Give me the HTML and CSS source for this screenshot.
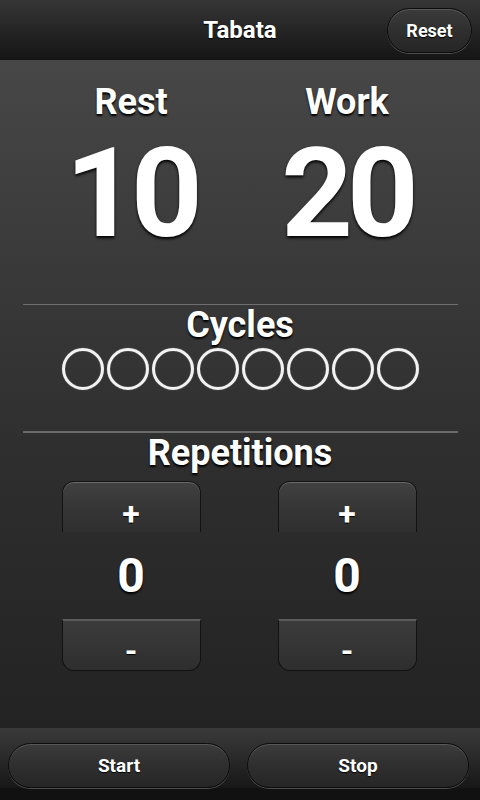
FILE: index.html
```html
<!DOCTYPE html>
<html>
<head>
<meta charset="utf-8">
<link rel="stylesheet" href="styles.css">
</head>
<body>
<div class="app">
  <header class="topbar">
    <div class="side"></div>
    <h1 class="title">Tabata</h1>
    <div class="side side-right"><button class="pill reset">Reset</button></div>
  </header>
  <main class="content">
    <section class="timers">
      <div class="timer">
        <div class="label">Rest</div>
        <div class="big">10</div>
      </div>
      <div class="timer">
        <div class="label">Work</div>
        <div class="big">20</div>
      </div>
    </section>
    <hr class="divider thin">
    <section class="cycles">
      <div class="heading">Cycles</div>
      <div class="rings">
        <span class="ring"></span><span class="ring"></span><span class="ring"></span><span class="ring"></span>
        <span class="ring"></span><span class="ring"></span><span class="ring"></span><span class="ring"></span>
      </div>
    </section>
    <hr class="divider thick">
    <section class="reps">
      <div class="heading rep-heading">Repetitions</div>
      <div class="steppers">
        <div class="stepper">
          <button class="step plus">+</button>
          <div class="count">0</div>
          <button class="step minus">-</button>
        </div>
        <div class="stepper">
          <button class="step plus">+</button>
          <div class="count">0</div>
          <button class="step minus">-</button>
        </div>
      </div>
    </section>
  </main>
  <footer class="bottombar">
    <button class="pill action">Start</button>
    <button class="pill action">Stop</button>
  </footer>
</div>
</body>
</html>
```
FILE: styles.css
```css
* { box-sizing: border-box; }
html, body { margin: 0; padding: 0; }
body {
  width: 480px;
  height: 800px;
  overflow: hidden;
  font-family: Roboto, "Liberation Sans", sans-serif;
  font-weight: 700;
  color: #fff;
  background: #222;
}
.app {
  display: flex;
  flex-direction: column;
  height: 800px;
}
.topbar {
  height: 60px;
  display: grid;
  grid-template-columns: 1fr auto 1fr;
  align-items: center;
  background: linear-gradient(#363636, #2a2a2a 35%, #151515);
}
.title {
  margin: 0;
  font-size: 24px;
  line-height: 30px;
  font-weight: 700;
  text-shadow: 0 1px 1px #000;
  padding-bottom: 1px;
}
.side-right {
  display: flex;
  justify-content: flex-end;
  padding-right: 8px;
}
.pill {
  font-family: Roboto, "Liberation Sans", sans-serif;
  font-weight: 700;
  color: #fff;
  font-size: 18px;
  text-shadow: 0 1px 1px #000;
  border: 1px solid #0c0c0c;
  border-radius: 24px;
  background: linear-gradient(#3b3b3b, #2f2f2f 50%, #262626);
  box-shadow: inset 0 1px 0 #5a5a5a, 0 1px 0 #4e4e4e;
  padding: 0;
}
.reset {
  width: 85px;
  height: 45px;
  margin-top: 1px;
}
.content {
  height: 668px;
  display: flex;
  flex-direction: column;
  background: linear-gradient(#474747 0, #3a3a3a 30%, #2e2e2e 60%, #232323 100%);
}
.timers {
  display: grid;
  grid-template-columns: 216px 216px;
  padding: 22px 0 0 23px;
}
.timer {
  display: flex;
  flex-direction: column;
  align-items: center;
}
.label {
  font-size: 36px;
  line-height: 40px;
  text-shadow: 0 2px 2px #000;
}
.big {
  font-size: 125px;
  line-height: 125px;
  margin-top: 9px;
  letter-spacing: -6px;
  text-shadow: 0 2px 3px #000;
}
.divider {
  border: 0;
  margin: 0 22px 0 23px;
}
.divider.thin {
  margin-top: 48px;
  height: 1px;
  background: #6f6f6f;
}
.divider.thick {
  margin-top: 41px;
  height: 2px;
  background: #6a6a6a;
}
.cycles, .reps {
  display: flex;
  flex-direction: column;
  align-items: center;
}
.heading {
  font-size: 36px;
  line-height: 40px;
  text-shadow: 0 2px 2px #000;
}
.rings {
  display: flex;
  gap: 3px;
  margin-top: 3px;
}
.ring {
  width: 42px;
  height: 42px;
  border-radius: 50%;
  border: 3px solid #f2f2f2;
  box-shadow: 0 0 1px #999, inset 0 0 1px #999;
}
.rep-heading {
  margin-top: 0;
}
.steppers {
  align-self: stretch;
  display: grid;
  grid-template-columns: 216px 216px;
  padding-left: 23px;
  margin-top: 8px;
}
.stepper {
  display: flex;
  flex-direction: column;
  align-items: center;
}
.step {
  width: 139px;
  height: 51px;
  font-family: Roboto, "Liberation Sans", sans-serif;
  font-weight: 700;
  color: #fff;
  font-size: 32px;
  line-height: 32px;
  text-shadow: 0 1px 1px #000;
  background: linear-gradient(#414141, #363636 50%, #2f2f2f);
  border: 1px solid #121212;
  padding: 14px 0 0;
}
.plus {
  border-bottom: 0;
  border-radius: 12px 12px 0 0;
  box-shadow: inset 0 1px 0 #6a6a6a;
}
.minus {
  height: 52px;
  border-top: 2px solid #5c5c5c;
  border-radius: 0 0 12px 12px;
  background: linear-gradient(#3b3b3b, #353535 50%, #2e2e2e);
  padding-top: 11px;
}
.count {
  height: 87px;
  display: flex;
  align-items: center;
  justify-content: center;
  font-size: 48px;
  text-shadow: 0 2px 2px #000;
}
.bottombar {
  height: 72px;
  display: flex;
  gap: 17px;
  padding: 15px 11px 0 8px;
  background: linear-gradient(#3a3a3a, #2a2a2a 40%, #171717 83%, #111 84%, #111);
}
.action {
  flex: 1;
  height: 45px;
  font-size: 19px;
}
```
